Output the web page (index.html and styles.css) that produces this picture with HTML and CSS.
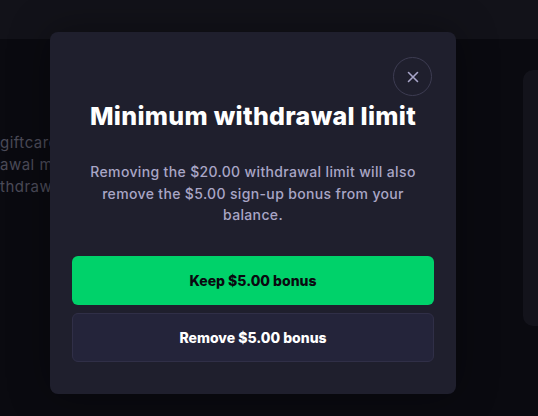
FILE: index.html
```html
<!DOCTYPE html>
<html lang="en">
<head>
    <meta charset="UTF-8">
    <meta name="viewport" content="width=device-width, initial-scale=1.0">
    <title>Minimum withdrawal limit</title>
    <link rel="stylesheet" href="styles.css">
</head>
<body>

<div class="topbar"></div>

<div class="page">
    <div class="page-text">
        <p>giftcards</p>
        <p>awal min</p>
        <p>thdrawals</p>
    </div>
    <div class="side-card"></div>
</div>

<div class="modal">
    <div class="modal-head">
        <button class="close-btn" aria-label="Close">
            <svg width="12" height="12" viewBox="0 0 12 12">
                <path d="M1.5 1.5 L10.5 10.5 M10.5 1.5 L1.5 10.5" stroke="#a8a5c9" stroke-width="1.6" stroke-linecap="round"/>
            </svg>
        </button>
    </div>
    <h2 class="modal-title">Minimum withdrawal limit</h2>
    <p class="modal-text">Removing the $20.00 withdrawal limit will also remove the $5.00 sign-up bonus from your balance.</p>
    <div class="modal-actions">
        <button class="btn btn-keep">Keep $5.00 bonus</button>
        <button class="btn btn-remove">Remove $5.00 bonus</button>
    </div>
</div>

</body>
</html>
```

FILE: styles.css
```css
body {
    margin: 0;
    padding: 0;
    width: 538px;
    height: 416px;
    overflow: hidden;
    background-color: #0a0a10;
    font-family: Inter, "Open Sans", sans-serif;
}
.topbar {
    height: 39px;
    background-color: #121219;
}
.page {
    display: flex;
    justify-content: space-between;
    padding-top: 31px;
}
.page-text {
    padding-top: 62px;
    color: #4b4a58;
    font-size: 15px;
    letter-spacing: 0.5px;
    white-space: nowrap;
}
.page-text p {
    margin: 0;
    line-height: 22px;
}
.side-card {
    width: 40px;
    height: 256px;
    margin-right: -25px;
    background-color: #13131b;
    border-radius: 10px;
}
.modal {
    position: absolute;
    left: 50px;
    top: 32px;
    width: 406px;
    box-sizing: border-box;
    padding: 25px 22px 32px;
    background-color: #1f1f2d;
    border-radius: 8px;
    box-shadow: 0 0 40px rgba(0, 0, 0, 0.35);
    text-align: center;
}
.modal-head {
    display: flex;
    justify-content: flex-end;
}
.close-btn {
    width: 39px;
    height: 39px;
    margin-right: 2px;
    padding: 0;
    display: flex;
    align-items: center;
    justify-content: center;
    background: none;
    border: 1px solid #3d3c52;
    border-radius: 50%;
    cursor: pointer;
}
.modal-title {
    margin: 2px 0 0;
    color: #ffffff;
    font-size: 25px;
    font-weight: 800;
    line-height: 36px;
    letter-spacing: 0.3px;
}
.modal-text {
    margin: 27px 6px 0;
    color: #a9a6c6;
    font-size: 14px;
    font-weight: 500;
    line-height: 21.5px;
    letter-spacing: 0.35px;
}
.modal-actions {
    display: flex;
    flex-direction: column;
    gap: 8px;
    margin-top: 30px;
}
.btn {
    height: 49px;
    border-radius: 6px;
    font-family: Inter, "Open Sans", sans-serif;
    font-size: 14px;
    font-weight: 800;
    cursor: pointer;
}
.btn-keep {
    background-color: #00d26a;
    border: none;
    color: #0a0a10;
}
.btn-remove {
    background-color: #24243a;
    border: 1px solid #302f47;
    color: #ffffff;
}
```
